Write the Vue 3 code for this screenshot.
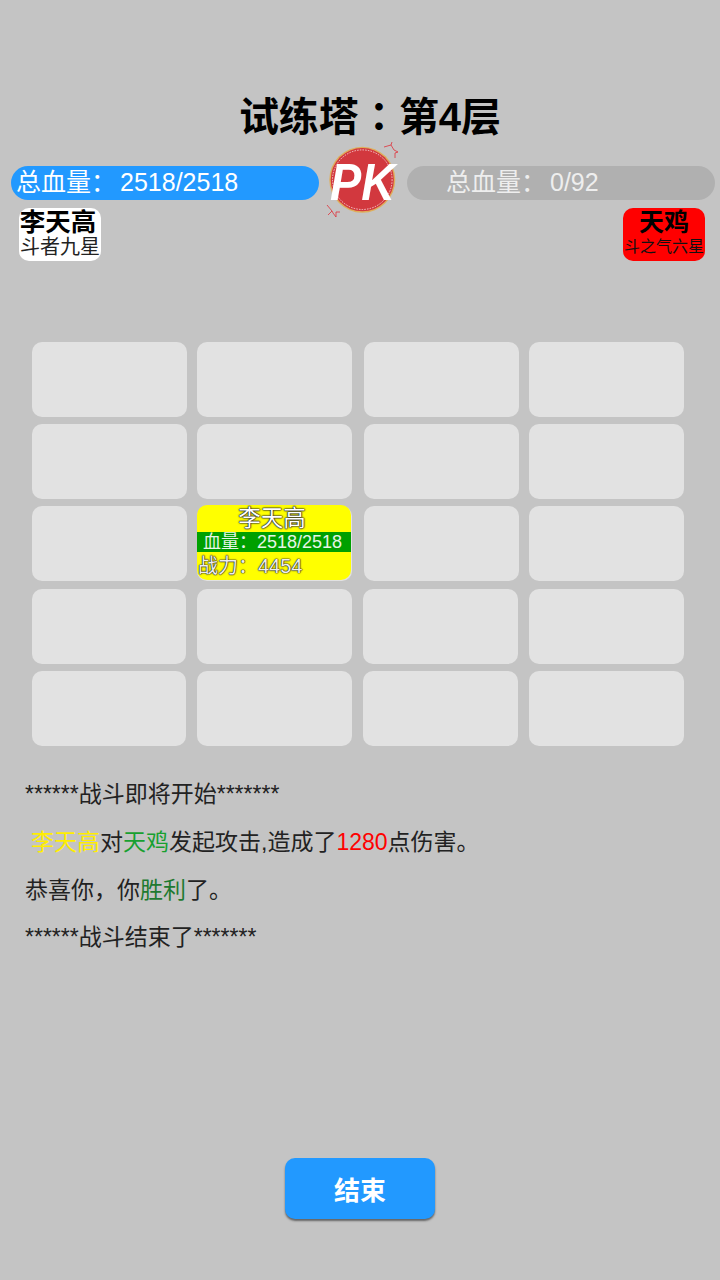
<template>
  <div class="page">
    <h1 class="title">试练塔<span class="title__colon">：</span>第4层</h1>

    <div class="versus">
      <div class="hp hp--mine">总血量：<span class="hp__num">2518/2518</span></div>
      <svg class="pk" viewBox="0 0 85 90" aria-label="PK">
        <path class="spark" d="M64 12 L71 10 L72 7 M71 10 L74 15 L78 17 L75 18 L75 23" />
        <path class="spark" d="M7 70 L12 76 L8 80 M12 76 L13 78 L16 82 L16 77 L20 77" />
        <circle cx="42.3" cy="44.7" r="33" fill="#dfae5a" />
        <circle cx="42.3" cy="44.7" r="31.6" fill="#d2383e" />
        <circle cx="42.3" cy="44.7" r="29.8" class="stitch" />
        <text x="10" y="65" class="pk__text" textLength="65" lengthAdjust="spacingAndGlyphs">PK</text>
      </svg>
      <div class="hp hp--foe">总血量：<span class="hp__num">0/92</span></div>
    </div>

    <div class="fighters">
      <div class="tag tag--mine">
        <div class="tag__name tag__name--mine">李天高</div>
        <div class="tag__rank">斗者九星</div>
      </div>
      <div class="tag tag--foe">
        <div class="tag__name">天鸡</div>
        <div class="tag__rank tag__rank--small">斗之气六星</div>
      </div>
    </div>

    <div class="board">
      <div v-for="(row, r) in rows" :key="r" class="board__row" :class="{ 'board__row--low': r > 2 }">
        <div v-for="c in row" :key="c" class="cell">
          <div v-if="r === 2 && c === 1" class="unit">
            <div class="unit__name">李天高</div>
            <div class="unit__hp">血量：2518/2518</div>
            <div class="unit__power">战力：4454</div>
          </div>
        </div>
      </div>
    </div>

    <div class="log">
      <p>******战斗即将开始*******</p>
      <p class="log__indent"><span class="c-yellow">李天高</span>对<span class="c-green">天鸡</span>发起攻击,造成了<span class="c-red">1280</span>点伤害。</p>
      <p>恭喜你，你<span class="c-dark">胜利</span>了。</p>
      <p>******战斗结束了*******</p>
    </div>

    <button class="end">结束</button>
  </div>
</template>

<script setup>
const rows = [0, 1, 2, 3, 4].map(() => [0, 1, 2, 3])
</script>

<style>
html,
body {
  margin: 0;
  background: #c4c4c4;
}
</style>

<style scoped>
.page {
  width: 720px;
  height: 1280px;
  display: flex;
  flex-direction: column;
  background: #c4c4c4;
  font-family: "Liberation Sans", "Noto Sans CJK SC", sans-serif;
  overflow: hidden;
}

.title {
  margin: 88px 0 0;
  padding-left: 20px;
  height: 52px;
  line-height: 52px;
  text-align: center;
  font-size: 40px;
  font-weight: 700;
  color: #000;
}

.title__colon {
  font-family: "Noto Sans CJK TC", sans-serif;
}

.versus {
  display: flex;
  align-items: center;
  height: 90px;
  margin-top: -5px;
  padding: 0 5px 0 11px;
}

.hp {
  width: 308px;
  height: 34px;
  margin-top: 6px;
  line-height: 32px;
  border-radius: 17px;
  font-size: 25px;
  color: #fff;
  box-sizing: border-box;
  white-space: nowrap;
}

.hp__num {
  margin-left: 4px;
}

.hp--mine {
  background: #2299ff;
  padding-left: 5px;
}

.hp--foe {
  background: #b0b0b0;
  color: #eee;
  padding-left: 39px;
}

.pk {
  width: 85px;
  height: 90px;
  margin: 0 2px 0 1px;
  flex: none;
}

.spark {
  fill: none;
  stroke: #e0303a;
  stroke-width: 0.8;
}

.stitch {
  fill: none;
  stroke: #fff;
  stroke-width: 0.7;
  stroke-dasharray: 1.5 1.2;
}

.pk__text {
  font-family: "Liberation Sans", sans-serif;
  font-size: 52px;
  font-weight: 700;
  font-style: italic;
  fill: #fff;
}

.fighters {
  display: flex;
  justify-content: space-between;
  margin-top: -17px;
  padding: 0 15px 0 19px;
}

.tag {
  width: 82px;
  height: 53px;
  border-radius: 10px;
  text-align: center;
  color: #000;
  overflow: hidden;
  white-space: nowrap;
}

.tag--mine {
  background: #fff;
}

.tag--foe {
  background: #ff0000;
}

.tag__name {
  height: 28px;
  line-height: 28px;
  font-size: 25px;
  font-weight: 700;
}

.tag__name--mine {
  font-size: 25.5px;
  padding-right: 4px;
}

.tag__rank {
  height: 22px;
  line-height: 22px;
  font-size: 20px;
  color: #222;
}

.tag__rank--small {
  font-size: 16px;
  color: #111;
}

.board {
  display: flex;
  flex-direction: column;
  gap: 7.35px;
  margin-top: 80.6px;
  padding-left: 32px;
}

.board__row {
  display: flex;
}

.cell {
  position: relative;
  width: 155px;
  height: 75px;
  border-radius: 10px;
  background: #e2e2e2;
  margin-left: 10px;
}

.cell:first-child {
  margin-left: 0;
}

.cell:nth-child(3) {
  margin-left: 12px;
}

/* the last two rows sit half a pixel left and are slightly narrower */
.board__row--low {
  margin-left: -0.5px;
}

.board__row--low .cell {
  width: 154.5px;
  margin-left: 11.5px;
}

.board__row--low .cell:first-child {
  margin-left: 0;
}

.board__row--low .cell:nth-child(2) {
  margin-left: 11px;
}

/* sits a pixel up and left of its cell, so the cell shows along two edges */
.unit {
  position: absolute;
  inset: -1px 1px 1px 0;
  border-radius: 10px;
  background: #ffff00;
  overflow: hidden;
  color: #fff;
  white-space: nowrap;
}

.unit__name {
  height: 27px;
  line-height: 28px;
  padding-right: 4px;
  text-align: center;
  font-size: 22.5px;
  text-shadow: 0 0 1px #111, 0 0 1px #111, 0 0 2px #444, 0 0 2px #444;
}

.unit__hp {
  height: 20px;
  line-height: 20px;
  padding-left: 6px;
  font-size: 18px;
  background: #00a000;
  color: #e6f5e6;
}

.unit__power {
  line-height: 28px;
  padding-left: 1px;
  font-size: 20px;
  color: #eee;
  text-shadow: 0 0 1px #111, 0 0 1px #111, 0 0 2px #444;
}

.log {
  margin-top: 25.3px;
  padding-left: 25px;
  font-size: 23px;
  color: #222;
}

.log p {
  margin: 0;
  height: 47.7px;
  line-height: 47.7px;
  white-space: nowrap;
}

.log__indent {
  padding-left: 6px;
}

.c-yellow {
  color: #ffee00;
}

.c-green {
  color: #18a030;
}

.c-red {
  color: #ff0000;
}

.c-dark {
  color: #1e7a30;
}

.end {
  align-self: center;
  width: 150px;
  height: 61px;
  margin-top: auto;
  margin-bottom: 61px;
  border: 0;
  border-radius: 10px;
  background: #2299ff;
  box-shadow: 0 2px 2px #666;
  color: #fff;
  font-family: inherit;
  font-size: 26px;
  font-weight: 700;
}
</style>
